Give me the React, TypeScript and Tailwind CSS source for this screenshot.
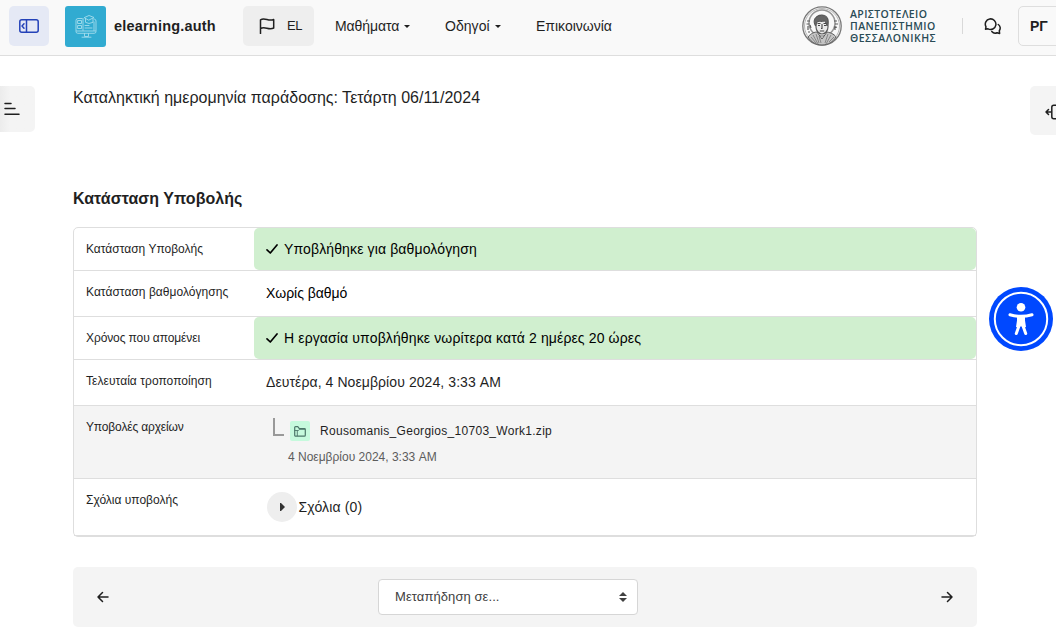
import type { ReactNode } from "react";

const stroke = {
  fill: "none",
  stroke: "currentColor",
  strokeWidth: 1.5,
  strokeLinecap: "round" as const,
  strokeLinejoin: "round" as const,
};

function Check() {
  return (
    <svg className="mr-[6px] h-3 w-3 shrink-0" viewBox="0 0 12 12" {...stroke} strokeWidth={1.7}>
      <path d="M1 6.8 4.3 10 11 2" />
    </svg>
  );
}

function SiteLogo() {
  return (
    <div className="ml-4 flex h-[41px] w-[41px] shrink-0 items-center justify-center rounded-[3px] bg-[#31abd1]">
      <svg className="mb-px h-6 w-[22px] text-[#a5dcec]" viewBox="0 0 22 24" {...stroke} strokeWidth={0.9}>
        <path d="M7 4.500H3A2 2 0 0 0 1 6.500v11A1.800 1.800 0 0 0 2.800 19.300h16.400A1.800 1.800 0 0 0 21 17.500V7a2 2 0 0 0-1.500-2" />
        <path d="M8 4.500v12M19 8v8.500M9.500 3.500 14 1.500l5 2-5 2.500zM10.500 4.500v3.800l3.500 1.200 4-1.200V4.500" />
        <path d="M3 6.500h3.500v3H3zM3 11.500h3.500v3H3zM10 11.500h4M10 14h7M1.500 17h19M9.500 19.500v3h4v-3M7 23.200h9" />
      </svg>
    </div>
  );
}

function Seal() {
  return (
    <svg className="h-10 w-10 shrink-0" viewBox="0 0 40 40" fill="none" stroke="#5c5c5c">
      <circle cx="20" cy="20" r="19.200" strokeWidth="1.300" stroke="#777" />
      <circle cx="20" cy="20" r="17.500" strokeWidth=".8" stroke="#a5a5a5" />
      <circle cx="20" cy="17" r="13" strokeWidth="1.500" stroke="#969696" />
      <path d="M5 15h3M4.500 18h3M6 20v4M8 19l1 3M32 15h3M33 18h3M33 20v4M35 21l-3 1M6 26h2" strokeWidth="1.200" />
      <path d="M6 31c3-4 7-5 9-5l5 7 5-7c5 1 8 3 9 5-3 5-8 8-14 8S9 36 6 31z" fill="#c4c4c4" strokeWidth="1" />
      <path d="M14 28l3 9M17 30l2 7M26 28l-3 9M29 29l-5 9M9 31l5 6M32 31l-5 5M11 29l5 9" strokeWidth=".6" />
      <path d="M14 14c0-3 2-5 6-5s6 3 6 6v6c0 4-3 7-6 7s-6-3-6-7z" fill="#e9e9e9" strokeWidth="1.200" />
      <path d="M13.500 20c-2.500-4-1.500-9 3-10 4-1.500 8 0 9 3.500 1 2.500.5 4.500-.5 6.500-1-3-1.500-4-2.500-5-3 1-5 0-6.500.5-2 .5-1.500 2.500-2.500 4.500z" fill="#666" stroke="#555" />
      <path d="M15.500 17.500h3M21.500 17.500h3M16 19.500h2M22 19.500h2M20 18v4.500h-1M17.800 25h4.400" strokeWidth="1.100" stroke="#444" />
    </svg>
  );
}

function NavItem({ children, className, caret }: { children: ReactNode; className: string; caret?: boolean }) {
  return (
    <a className={`flex items-center whitespace-nowrap text-[14px] ${className}`}>
      {children}
      {caret && (
        <svg className="mt-[1px] ml-[5px] h-[3px] w-[6px]" viewBox="0 0 6 3" fill="currentColor">
          <path d="M0 0h6L3 3z" />
        </svg>
      )}
    </a>
  );
}

function Header() {
  return (
    <header className="flex h-[56px] w-full items-start overflow-hidden border-b border-[#dedede] bg-[#f9f9f9] pt-[6px] pl-[9px]">
      <button className="flex h-10 w-10 shrink-0 items-center justify-center rounded-[5px] bg-[#e5e9f5] text-[#2442b8]">
        <svg className="h-[14px] w-5" viewBox="0 0 20 14" {...stroke}>
          <rect x=".8" y=".8" width="18.400" height="12.400" rx="2" />
          <path d="M7.500 1v12M5 4.800 3 7l2 2.200" />
        </svg>
      </button>
      <SiteLogo />
      <div className="flex h-10 w-[137px] shrink-0 items-center pl-2 text-[14.500px] font-bold whitespace-nowrap">
        <span className="mt-[1px] tracking-[0.200px]">elearning.auth</span>
      </div>
      <button className="flex h-10 w-[71px] shrink-0 items-center rounded-[5px] bg-[#eeeeee] pl-4 text-[13px]">
        <svg className="mr-3 h-4 w-4" viewBox="0 0 16 16" {...stroke}>
          <path d="M1.500 15.500V1.800C6-.8 9.500 3.800 14.700 1.500V10C9.500 12.500 6 7.800 1.500 10.500" />
        </svg>
        <span className="tracking-[-0.300px]">EL</span>
      </button>
      <nav className="flex h-10 shrink-0 items-center">
        <NavItem caret className="ml-[21px] w-[110px] tracking-[-0.080px]">Μαθήματα</NavItem>
        <NavItem caret className="w-[91px] tracking-[0.050px]">Οδηγοί</NavItem>
        <NavItem className="w-[76px]">Επικοινωνία</NavItem>
      </nav>
      <div className="ml-[190px] flex h-10 shrink-0 items-center">
        <Seal />
        <div className="ml-2 w-[112px] font-['Open_Sans',sans-serif] text-[10.500px] leading-[12px] font-semibold whitespace-nowrap text-[#294b55]">
          <div className="tracking-[0.400px]">ΑΡΙΣΤΟΤΕΛΕΙΟ</div>
          <div className="tracking-[0.400px]">ΠΑΝΕΠΙΣΤΗΜΙΟ</div>
          <div className="tracking-[0.500px]">ΘΕΣΣΑΛΟΝΙΚΗΣ</div>
        </div>
        <div className="h-4 w-px bg-[#d9d9d9]" />
        <svg className="ml-[21px] h-[17px] w-[17px]" viewBox="0 0 17 17" {...stroke}>
          <path d="M1.500 11.200 2 8.800A5.300 5.300 0 1 1 4 10.800zM14.300 6.500a4.300 4.300 0 0 1 1 6.200l.3 2.700-2.500-.6a4.500 4.500 0 0 1-5.300-1.200" />
        </svg>
        <button className="ml-[17px] h-10 w-12 rounded-[5px] border border-[#dedede] pl-[11px] text-left text-[14px] font-bold">ΡΓ</button>
      </div>
    </header>
  );
}

function Row({ label, height, children, tint = "", tracking = "" }: { label: string; height: string; children: ReactNode; tint?: string; tracking?: string }) {
  return (
    <div className={`flex border-b border-[#dedede] ${height} ${tint}`}>
      <div className={`w-[180px] shrink-0 pt-[12px] pl-3 text-[12px] leading-[18px] whitespace-nowrap ${tracking}`}>{label}</div>
      <div className="min-w-0 flex-1">{children}</div>
    </div>
  );
}

function Success({ children }: { children: ReactNode }) {
  return (
    <div className="flex h-full items-center rounded-[5px] bg-[#d0efcf] pl-3 text-[14px] tracking-[0.130px] text-black">
      <Check />
      {children}
    </div>
  );
}

export default function App() {
  return (
    <div className="relative h-[634px] w-[1056px] overflow-hidden bg-white font-['Liberation_Sans',sans-serif] text-[#1f1f1f]">
      <Header />
      <main className="flex flex-col pr-[79px] pl-[73px]">
        <p className="mt-[30px] h-6 text-[16px] leading-6">Καταληκτική ημερομηνία παράδοσης: Τετάρτη 06/11/2024</p>
        <h3 className="mt-[77px] h-6 text-[16px] leading-6 font-bold tracking-[0.040px]">Κατάσταση Υποβολής</h3>
        <section className="mt-[16px] rounded-[5px] border border-[#dedede]">
          <Row label="Κατάσταση Υποβολής" height="h-[43px]">
            <Success>Υποβλήθηκε για βαθμολόγηση</Success>
          </Row>
          <Row label="Κατάσταση βαθμολόγησης" height="h-[46px]" tracking="tracking-[0.030px]">
            <div className="flex h-full items-center pl-3 text-[14px] tracking-[-0.050px] text-black">Χωρίς βαθμό</div>
          </Row>
          <Row label="Χρόνος που απομένει" height="h-[43px]" tracking="tracking-[-0.100px]">
            <Success>Η εργασία υποβλήθηκε νωρίτερα κατά 2 ημέρες 20 ώρες</Success>
          </Row>
          <Row label="Τελευταία τροποποίηση" height="h-[46px]" tracking="tracking-[0.050px]">
            <div className="flex h-full items-center pl-3 text-[14px] tracking-[0.080px]">Δευτέρα, 4 Νοεμβρίου 2024, 3:33 AM</div>
          </Row>
          <Row label="Υποβολές αρχείων" height="h-[73px]" tint="bg-[#f4f4f4]" tracking="tracking-[-0.150px]">
            <div className="flex h-[38px] pl-[19px]">
              <div className="mt-3 h-[18px] w-[11px] border-b-2 border-l-2 border-[#999999]" />
              <div className="mt-[15px] ml-[6px] flex h-5 w-5 items-center justify-center rounded-[2px] bg-[#c6fadd] text-[#4c7769]">
                <svg className="h-[11px] w-3" viewBox="0 0 12 11" {...stroke} strokeWidth={1.2}>
                  <path d="M.7 9V1.500A.8.8 0 0 1 1.500.7h2.300l1.500 2h5.200a.8.8 0 0 1 .8.8v5.700a1 1 0 0 1-1 1H1.700A1 1 0 0 1 .7 9" />
                  <path d="M1 4.500h3.300l1.500-1.200h5M3.300 5v4.700" strokeWidth={0.9} />
                </svg>
              </div>
              <a className="mt-4 ml-[10px] text-[12px] leading-[18px] tracking-[0.290px]">Rousomanis_Georgios_10703_Work1.zip</a>
            </div>
            <div className="mt-[4px] ml-[34px] text-[12px] leading-[18px] text-[#5c5c5c]">4 Νοεμβρίου 2024, 3:33 AM</div>
          </Row>
          <Row label="Σχόλια υποβολής" height="h-[57px]">
            <div className="flex h-full items-center pl-[13px] text-[14px] tracking-[0.150px]">
              <span className="mr-[1.500px] flex h-[30px] w-[30px] items-center justify-center rounded-full bg-[#eeeeee]">
                <svg className="ml-[1px] h-2 w-[5px]" viewBox="0 0 5 8" fill="#333">
                  <path d="M0 0h1l4 4-4 4H0z" />
                </svg>
              </span>
              Σχόλια (0)
            </div>
          </Row>
        </section>
        <div className="mt-[30px] flex h-[60px] items-center rounded-[5px] bg-[#f4f4f4] px-6">
          <svg className="h-3 w-3" viewBox="0 0 12 12" {...stroke}>
            <path d="M11 6H1M5.500 1.500 1 6l4.500 4.500" />
          </svg>
          <button className="ml-[269px] flex h-9 w-[260px] items-center justify-between rounded-[4px] border border-[#d6d6d6] bg-white pr-[10px] pl-4 text-[13px] text-[#404040]">
            <span className="tracking-[0.080px]">Μεταπήδηση σε...</span>
            <svg className="h-[10px] w-2" viewBox="0 0 8 10" fill="#404040">
              <path d="M0 4 4 0l4 4zM0 6h8l-4 4z" />
            </svg>
          </button>
          <svg className="ml-auto h-3 w-3" viewBox="0 0 12 12" {...stroke}>
            <path d="M1 6h10M6.500 1.500 11 6l-4.500 4.500" />
          </svg>
        </div>
      </main>
      <button className="absolute top-[86px] left-0 flex h-[46px] w-[35px] items-center rounded-r-[5px] bg-linear-to-r from-[#ececec] to-[#f4f4f4] to-30% pl-1">
        <svg className="h-[14px] w-4" viewBox="0 0 16 14" {...stroke}>
          <path d="M1 1.500h6M1 6.500h10M1 12.200h14" />
        </svg>
      </button>
      <button className="absolute top-[86px] right-0 h-[49px] w-[26px] rounded-l-[5px] bg-[#f4f4f4] pl-[15px]">
        <svg className="mt-[3px] h-4 w-5" viewBox="0 0 20 16" {...stroke}>
          <path d="M1 8h5M3.500 5.500 1 8l2.500 2.500" />
          <rect x="6.800" y="1.200" width="12" height="13.600" rx="2" />
        </svg>
      </button>
      <button className="absolute top-[287px] left-[989px] h-16 w-16">
        <svg className="h-16 w-16" viewBox="0 0 64 64" fill="none">
          <circle cx="32" cy="32" r="32" fill="#0048ff" />
          <circle cx="32" cy="32" r="26.200" stroke="#fff" strokeWidth="2" />
          <circle cx="32" cy="20.300" r="4.300" fill="#fff" />
          <path d="M21 27.700c7 2 15 2 22 0M27.300 46.500 30.300 38M36.700 46.500 33.700 38" stroke="#fff" strokeWidth="3" strokeLinecap="round" />
          <path d="M28 28.500h8v5l1 6.500-3.500 1L32 38.500 30.500 41l-3.500-1 1-6.500z" fill="#fff" />
        </svg>
      </button>
    </div>
  );
}
